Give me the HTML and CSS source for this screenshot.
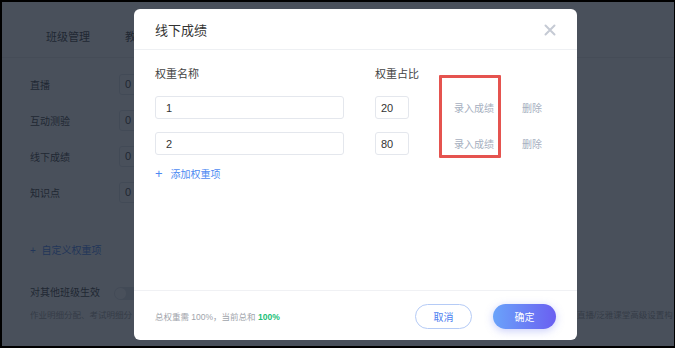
FILE: index.html
```html
<!DOCTYPE html>
<html lang="zh-CN">
<head>
    <meta charset="UTF-8">
    <meta name="viewport" content="width=device-width, initial-scale=1.0">
    <title>线下成绩</title>
    <link rel="stylesheet" href="styles.css">
</head>
<body>
    <div class="screen">
        <div class="page">
            <div class="tabs">
                <span class="tab">班级管理</span>
                <span class="tab">教学</span>
            </div>

            <div class="weights">
                <div class="weight-row"><span class="weight-label">直播</span><span class="weight-box">0</span></div>
                <div class="weight-row"><span class="weight-label">互动测验</span><span class="weight-box">0</span></div>
                <div class="weight-row"><span class="weight-label">线下成绩</span><span class="weight-box">0</span></div>
                <div class="weight-row"><span class="weight-label">知识点</span><span class="weight-box">0</span></div>
            </div>

            <div class="custom-link">+&nbsp; 自定义权重项</div>

            <div class="sync">
                <span>对其他班级生效</span>
                <span class="switch"></span>
            </div>

            <div class="note">
                <span class="note-left">作业明细分配、考试明细分</span>
                <span class="note-right">直播/泛雅课堂高级设置构</span>
            </div>
        </div>

        <div class="mask"></div>

        <div class="dialog">
            <div class="dialog-header">
                <span class="dialog-title">线下成绩</span>
                <svg class="close" width="12" height="12" viewBox="0 0 12 12">
                    <path d="M1.5 1.5 L10.5 10.5 M10.5 1.5 L1.5 10.5" stroke="#c5cad4" stroke-width="2" stroke-linecap="round"/>
                </svg>
            </div>

            <div class="dialog-body">
                <div class="grade-head">
                    <span class="col-name">权重名称</span>
                    <span class="col-ratio">权重占比</span>
                </div>

                <div class="grade-row">
                    <input class="name-input" type="text" value="1">
                    <input class="ratio-input" type="text" value="20">
                    <span class="action enter">录入成绩</span>
                    <span class="action">删除</span>
                </div>
                <div class="grade-row">
                    <input class="name-input" type="text" value="2">
                    <input class="ratio-input" type="text" value="80">
                    <span class="action enter">录入成绩</span>
                    <span class="action">删除</span>
                </div>

                <div class="add-link"><span class="plus">+</span>添加权重项</div>

                <div class="highlight"></div>
            </div>

            <div class="dialog-footer">
                <span class="total">总权重需 100%，当前总和 <b>100%</b></span>
                <div class="buttons">
                    <button class="btn btn-cancel">取消</button>
                    <button class="btn btn-ok">确定</button>
                </div>
            </div>
        </div>
    </div>
</body>
</html>
```

FILE: styles.css
```css
* {
    box-sizing: border-box;
}
body {
    margin: 0;
    background-color: #000;
    font-family: "Liberation Sans", "Noto Sans CJK SC", sans-serif;
}
.screen {
    position: relative;
    width: 672px;
    height: 344px;
    margin: 2px 1px 2px 2px;
    overflow: hidden;
    background-color: #fff;
}

/* page under the mask */
.page {
    padding-left: 28px;
    color: #333;
}
.tabs {
    display: flex;
    gap: 35px;
    margin-left: -28px;
    padding: 27px 0 12px 44px;
    border-bottom: 1px solid #e8e8e8;
    font-size: 11px;
    line-height: 16px;
}
.weights {
    padding-top: 8px;
}
.weight-row {
    display: flex;
    align-items: center;
    height: 36px;
    font-size: 10px;
}
.weight-label {
    width: 89px;
}
.weight-box {
    width: 120px;
    height: 21px;
    line-height: 19px;
    padding-left: 5px;
    border: 1px solid #dcdfe6;
    border-radius: 3px;
    font-size: 11px;
}
.custom-link {
    margin-top: 33px;
    font-size: 10px;
    line-height: 16px;
    color: #3d7cf2;
}
.sync {
    display: flex;
    align-items: center;
    gap: 14px;
    margin-top: 26px;
    font-size: 10px;
    line-height: 16px;
}
.switch {
    width: 30px;
    height: 13px;
    border-radius: 7px;
    background-color: #dcdfe6;
    position: relative;
}
.switch::after {
    content: "";
    position: absolute;
    left: 1px;
    top: 1px;
    width: 11px;
    height: 11px;
    border-radius: 50%;
    background-color: #fff;
}
.note {
    display: flex;
    margin-top: 6px;
    font-size: 8.5px;
    line-height: 16px;
    color: #999;
    white-space: nowrap;
}
.note-left {
    width: 547px;
    overflow: hidden;
}

.mask {
    position: absolute;
    inset: 0;
    background-color: rgba(28, 36, 50, 0.8);
}

/* dialog */
.dialog {
    position: absolute;
    left: 132px;
    top: 7px;
    width: 443px;
    height: 331px;
    background-color: #fff;
    border-radius: 6px;
    display: flex;
    flex-direction: column;
    color: #333;
}
.dialog-header {
    display: flex;
    align-items: center;
    justify-content: space-between;
    height: 41px;
    padding: 1px 21px 0 21px;
    border-bottom: 1px solid #eef0f3;
}
.dialog-title {
    font-size: 13px;
}
.close {
    margin-right: 0;
}
.dialog-body {
    position: relative;
    flex: 1;
    padding: 16px 21px 0;
}
.grade-head {
    display: flex;
    font-size: 11px;
    line-height: 16px;
    color: #444;
}
.col-name {
    width: 220px;
}
.grade-row {
    display: flex;
    align-items: center;
    margin-top: 14px;
}
.grade-row + .grade-row {
    margin-top: 13px;
}
input {
    height: 23px;
    border: 1px solid #e4e7ed;
    border-radius: 3px;
    font-family: inherit;
    font-size: 11px;
    color: #333;
    padding: 0 0 0 10px;
    outline: none;
}
.name-input {
    width: 189px;
}
.ratio-input {
    width: 34px;
    margin-left: 31px;
    padding-left: 5px;
}
.action {
    font-size: 10px;
    color: #a6afc0;
    margin-left: 28px;
}
.action.enter {
    margin-left: 45px;
}
.add-link {
    margin-top: 12px;
    font-size: 10px;
    line-height: 14px;
    color: #4d8af2;
}
.plus {
    font-size: 13px;
    margin-right: 8px;
}
.highlight {
    position: absolute;
    left: 305px;
    top: 25px;
    width: 62px;
    height: 83px;
    border: 3px solid #e5534f;
    border-radius: 1px;
}
.dialog-footer {
    display: flex;
    align-items: center;
    justify-content: space-between;
    height: 50px;
    padding: 1px 21px 0;
    border-top: 1px solid #f0f1f4;
}
.total {
    font-size: 8.5px;
    color: #a0a4ab;
}
.total b {
    color: #20bf78;
}
.buttons {
    display: flex;
    gap: 21px;
}
.btn {
    height: 25px;
    border-radius: 13px;
    font-family: inherit;
    font-size: 10px;
    cursor: pointer;
}
.btn-cancel {
    width: 57px;
    background-color: #fff;
    border: 1px solid #b5cbf6;
    color: #4c7df0;
}
.btn-ok {
    width: 63px;
    border: none;
    color: #fff;
    background: linear-gradient(to right, #6aa3fa, #6a5ff1);
    box-shadow: 0 2px 8px rgba(100, 115, 240, 0.35);
}
```
